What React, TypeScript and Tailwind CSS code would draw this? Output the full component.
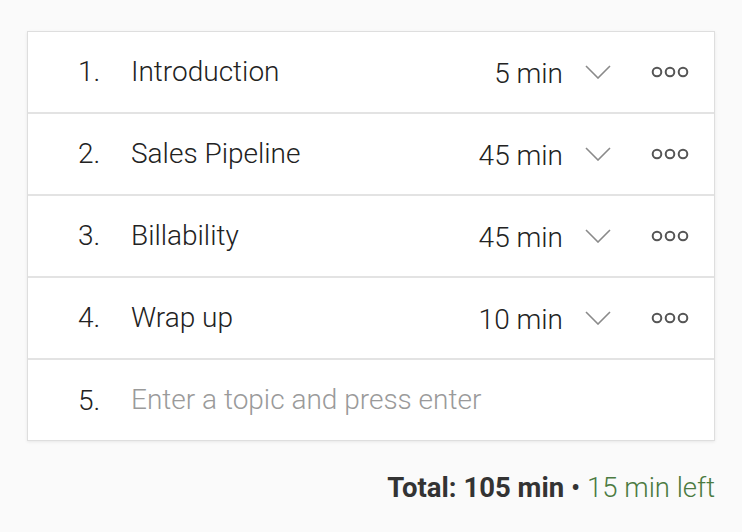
import React from 'react'

const topics = [
  { title: 'Introduction', minutes: 5 },
  { title: 'Sales Pipeline', minutes: 45 },
  { title: 'Billability', minutes: 45 },
  { title: 'Wrap up', minutes: 10 },
]

const Chevron = () => (
  <svg width="26" height="14" viewBox="0 0 26 14" fill="none" className="text-[#8a8a8a]">
    <path d="M1 1l12 12L25 1" stroke="currentColor" strokeWidth="1.6" />
  </svg>
)

const Dots = () => (
  <svg width="38" height="12" viewBox="0 0 38 12" fill="none" className="text-[#555]">
    <circle cx="6" cy="6" r="4.3" stroke="currentColor" strokeWidth="2" />
    <circle cx="19" cy="6" r="4.3" stroke="currentColor" strokeWidth="2" />
    <circle cx="32" cy="6" r="4.3" stroke="currentColor" strokeWidth="2" />
  </svg>
)

export default function App() {
  return (
    <div className="min-h-screen bg-[#fafafa] px-[27px] pt-[31px]" style={{ fontFamily: 'Roboto, "Noto Sans", sans-serif' }}>
      <div className="w-[688px] border border-[#dedede] bg-white shadow-[0_1px_3px_rgba(0,0,0,0.08)]">
        {topics.map((t, i) => (
          <div key={t.title} className="flex h-[82px] items-center border-b-2 border-[#e3e3e3] text-[28px] font-light text-[#222]">
            <span className="w-[103px] pl-[50px]">{i + 1}.</span>
            <span className="flex-1">{t.title}</span>
            <span className="mt-[4px]">{t.minutes} min</span>
            <span className="ml-[22px] mr-[40px]"><Chevron /></span>
            <span className="mr-[25px]"><Dots /></span>
          </div>
        ))}
        <div className="flex h-[80px] items-center text-[28px] font-light">
          <span className="mt-[2px] w-[103px] pl-[50px] text-[#222]">5.</span>
          <span className="text-[#9a9a9a]">Enter a topic and press enter</span>
        </div>
      </div>
      <div className="mt-[26px] w-[688px] text-right text-[27.5px] text-[#333]">
        <span className="font-bold">Total: 105 min</span>
        <span> • </span>
        <span className="font-light text-[#4b7a41]">15 min left</span>
      </div>
    </div>
  )
}
